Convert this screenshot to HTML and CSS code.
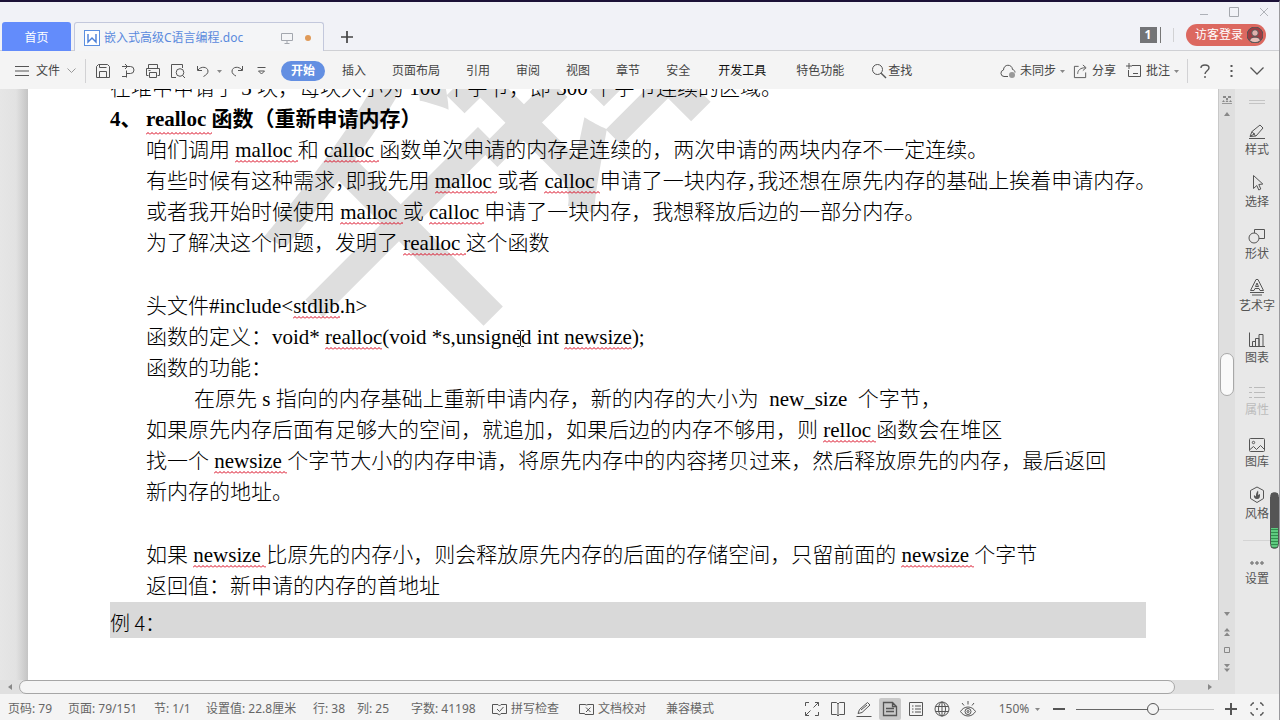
FILE: index.html
```html
<!DOCTYPE html>
<html lang="zh-CN">
<head>
<meta charset="utf-8">
<title>嵌入式高级C语言编程.doc</title>
<link rel="stylesheet" href="styles.css">
</head>
<body>
<div class="app">
  <header class="titlebar">
    <nav class="file-tabs">
      <button class="home-tab">首页</button>
      <div class="doc-tab">
        <svg class="icon" width="16" height="16" viewBox="0 0 16 16"><rect x=".5" y=".5" width="15" height="15" fill="#fff" stroke="#5b8fe0"/><path d="M4 4v8l4-4 4 4V4" stroke="#4a7fd8" stroke-width="1.4"/></svg>
        <span class="doc-name">嵌入式高级C语言编程.doc</span>
        <svg class="icon" width="12" height="12" viewBox="0 0 12 12"><path d="M.5 1.5h11v7H.5zM6 8.500v3M3.500 11.500h5" stroke="#a3a7ae"/></svg>
        <span class="dirty-dot"></span>
      </div>
      <button class="new-tab" aria-label="新建"><svg class="icon" width="12" height="12" viewBox="0 0 12 12"><path d="M6 0v12M0 6h12" stroke="#444" stroke-width="1.700"/></svg></button>
    </nav>
    <div class="title-right">
      <div class="window-buttons">
        <button aria-label="最小化"><svg class="icon" width="10" height="10" viewBox="0 0 10 10"><path d="M1 7.500h8" stroke="#aeb1b8"/></svg></button>
        <button aria-label="最大化"><svg class="icon" width="10" height="10" viewBox="0 0 10 10"><path d="M.5.5h9v9h-9z" stroke="#a5a8ae"/></svg></button>
        <button aria-label="关闭"><svg class="icon" width="10" height="10" viewBox="0 0 10 10"><path d="M1 1l8 8M9 1L1 9" stroke="#b0b3b9"/></svg></button>
      </div>
      <div class="account">
        <button class="window-count"><span>1</span></button>
        <i class="sep"></i>
        <button class="login">访客登录
          <svg class="icon" width="16" height="16" viewBox="0 0 16 16"><circle cx="8" cy="8" r="8" fill="#a03c42"/><circle cx="8" cy="6" r="3.300" fill="#e0b0ac"/><path d="M2.500 13.500c1-4.500 10-4.500 11 0A8 8 0 0 1 2.500 13.500z" fill="#e8beb8"/></svg>
        </button>
      </div>
    </div>
  </header>

  <div class="ribbon">
    <button class="file-menu">
      <svg class="icon" width="14" height="12" viewBox="0 0 14 12"><path d="M0 1.500h14M0 6h14M0 10.500h14" stroke="#555"/></svg>
      文件
      <svg class="icon" width="9" height="6" viewBox="0 0 9 6"><path d="M.5.5l4 4 4-4" stroke="#999"/></svg>
    </button>
    <i class="sep"></i>
    <div class="quick">
      <button aria-label="保存"><svg class="icon" width="16" height="16" viewBox="0 0 16 16"><path d="M1.500 14.500v-11l2-2h9l2 2v11zM4.500 14.500v-6h7v6M4.500 1.500v3h7"/></svg></button>
      <button aria-label="输出"><svg class="icon" width="16" height="16" viewBox="0 0 16 16"><path d="M2 3.500h8.500a3.500 3.500 0 0 1 0 7H6.500M5 1l2.500 2.500L5 6M6.500 14.500v-7M2 13.500h4.500"/></svg></button>
      <button aria-label="打印"><svg class="icon" width="16" height="16" viewBox="0 0 16 16"><path d="M3.500 5.500v-4h9v4M3.500 12.500h-2v-7h13v7h-2M4.500 9.500h7v5h-7zM3.500 7.500h2"/></svg></button>
      <button aria-label="打印预览"><svg class="icon" width="16" height="16" viewBox="0 0 16 16"><path d="M6 14.500H1.500v-13h11V5M12.500 12.500l2.500 2.500"/><circle cx="10" cy="9.500" r="3.800"/></svg></button>
      <button aria-label="撤销"><svg class="icon" width="16" height="16" viewBox="0 0 16 16"><path d="M2.500 3v4.500H7M3 7c3-4 9.500-3.500 10 1 .2 2.500-2 4-4.500 5.500"/></svg></button>
      <button class="drop" aria-label="撤销列表"><svg class="icon" width="5" height="3" viewBox="0 0 5 3"><path class="solid" d="M0 0h5L2.500 3z"/></svg></button>
      <button aria-label="恢复"><svg class="icon" width="16" height="16" viewBox="0 0 16 16"><path d="M13.500 3v4.500H9M13 7c-3-4-9.500-3.500-10 1-.2 2.500 2 4 4 5"/></svg></button>
      <button aria-label="更多"><svg class="icon" width="9" height="8" viewBox="0 0 9 8"><path d="M.5.5h8M1.500 4l3 3 3-3z"/></svg></button>
    </div>
    <nav class="menu">
      <button class="active">开始</button>
      <button>插入</button>
      <button>页面布局</button>
      <button>引用</button>
      <button>审阅</button>
      <button>视图</button>
      <button>章节</button>
      <button>安全</button>
      <button class="wide strong">开发工具</button>
      <button class="wide">特色功能</button>
      <button class="find"><svg class="icon" width="16" height="16" viewBox="0 0 16 16"><circle cx="6.500" cy="6.500" r="5"/><path d="M10.200 10.200l4.800 4.800" stroke-width="1.400"/></svg>查找</button>
    </nav>
    <div class="ribbon-right">
      <button class="sync"><svg class="icon" width="16" height="16" viewBox="0 0 16 16"><path d="M8 13.500H4a3.300 3.300 0 0 1-.5-6.500C3.500 1 12 .5 12.500 6.500c1.500.3 2.500 1.500 2.500 3"/><circle cx="12" cy="12" r="3" fill="#999" stroke="none"/></svg>未同步<svg class="icon" width="5" height="3" viewBox="0 0 5 3"><path class="solid" d="M0 0h5L2.500 3z"/></svg></button>
      <button class="share"><svg class="icon" width="15" height="15" viewBox="0 0 16 16"><path d="M6 2.500H1.500v12h12V9M5 10.500c0-4 3-6.500 8-6.500M10.500 1L14 4l-3.500 3"/></svg>分享</button>
      <button class="comment"><svg class="icon" width="16" height="16" viewBox="0 0 16 16"><path d="M6 2.500h8.500v11h-12V7M3 0v6M0 3h6M7 10.500h5"/></svg>批注<svg class="icon" width="5" height="3" viewBox="0 0 5 3"><path class="solid" d="M0 0h5L2.500 3z"/></svg></button>
      <i class="sep"></i>
      <button class="tool" aria-label="帮助"><svg class="icon" width="10" height="14" viewBox="0 0 10 14"><path d="M1 4c0-4 8-4 8 0 0 2.500-4 3-4 6M5 12v2" stroke-width="1.400"/></svg></button>
      <button class="tool" aria-label="更多选项"><svg class="icon" width="3" height="12" viewBox="0 0 3 12"><path d="M1.500 0v2M1.500 5v2M1.500 10v2" stroke-width="2"/></svg></button>
      <button class="tool" aria-label="收起功能区"><svg class="icon" width="14" height="8" viewBox="0 0 14 8"><path d="M.5.5L7 7 13.500.5" stroke-width="1.300"/></svg></button>
    </div>
  </div>

  <div class="workspace">
    <div class="viewer">
      <div class="canvas">
        <main class="page">
          <div class="watermark" aria-hidden="true">千<span>锋</span></div>
          <article class="text">
            <p class="out">在堆中申请了 3 块，每块大小为 100 个字节，即 300 个字节连续的区域。</p>
            <h1><span class="num">4、</span><u>realloc </u>函数（重新申请内存）</h1>
            <p>咱们调用 <u>malloc </u>和 <u>calloc </u>函数单次申请的内存是连续的，两次申请的两块内存不一定连续。</p>
            <p>有些时候有这种需求<span class="half">，</span>即我先用 <u>malloc </u>或者 <u>calloc </u>申请了一块内存<span class="half">，</span>我还想在原先内存的基础上挨着申请内存。</p>
            <p>或者我开始时候使用 <u>malloc </u>或 <u>calloc </u>申请了一块内存，我想释放后边的一部分内存。</p>
            <p>为了解决这个问题，发明了 <u>realloc </u>这个函数</p>
            <p class="blank"></p>
            <p>头文件#include&lt;<u>stdlib</u>.h&gt;</p>
            <p>函数的定义：void* <u>realloc</u>(void *s,unsign<span class="caret-host">e<svg class="ibeam" width="9" height="17" viewBox="0 0 9 17"><path d="M1 .5h2.500l1 1 1-1H8M4.500 1.500v14M1 16.500h2.500l1-1 1 1H8" fill="none" stroke="#222"/></svg></span>d int <u>newsize</u>);</p>
            <p>函数的功能：</p>
            <p class="indent">在原先 s 指向的内存基础上重新申请内存，新的内存的大小为  new_size  个字节，</p>
            <p>如果原先内存后面有足够大的空间，就追加，如果后边的内存不够用，则 <u>relloc </u>函数会在堆区</p>
            <p>找一个 <u>newsize </u>个字节大小的内存申请，将原先内存中的内容拷贝过来，然后释放原先的内存，最后返回</p>
            <p>新内存的地址。</p>
            <p class="blank"></p>
            <p>如果 <u>newsize </u>比原先的内存小，则会释放原先内存的后面的存储空间，只留前面的 <u>newsize </u>个字节</p>
            <p>返回值：新申请的内存的首地址</p>
            <p class="example">例 4：</p>
          </article>
        </main>
        <div class="vscroll">
          <svg class="icon" width="10" height="10" viewBox="0 0 10 10"><path class="solid" d="M1 1h3v2H1zM6 1h3v2H6zM4 3h2v2H4zM0 7l1.500-2L3 7zM3.500 7L5 5l1.500 2zM7 7l1.500-2L10 7z"/><path d="M0 8.500h10" stroke="#999"/></svg>
          <button class="arrow" aria-label="向上"><svg class="icon" width="6" height="4" viewBox="0 0 6 4"><path class="solid" d="M0 4h6L3 0z"/></svg></button>
          <div class="vtrack"><div class="vthumb"></div></div>
          <button class="arrow" aria-label="向下"><svg class="icon" width="6" height="4" viewBox="0 0 6 4"><path class="solid" d="M0 0h6L3 4z"/></svg></button>
          <button class="arrow" aria-label="上一页"><svg class="icon" width="6" height="8" viewBox="0 0 6 8"><path class="solid" d="M0 3.500h6L3 0zM0 8h6L3 4.500z"/></svg></button>
          <button class="arrow" aria-label="选择浏览对象"><svg class="icon" width="6" height="6" viewBox="0 0 6 6"><path d="M.5.5h5v5h-5z" stroke="#888"/></svg></button>
          <button class="arrow" aria-label="下一页"><svg class="icon" width="6" height="8" viewBox="0 0 6 8"><path class="solid" d="M0 0h6L3 3.500zM0 4.500h6L3 8z"/></svg></button>
        </div>
      </div>
      <div class="hscroll">
        <button aria-label="向左"><svg class="icon" width="4" height="6" viewBox="0 0 4 6"><path class="solid" d="M4 0v6L0 3z"/></svg></button>
        <div class="hthumb"></div>
        <button class="right" aria-label="向右"><svg class="icon" width="4" height="6" viewBox="0 0 4 6"><path class="solid" d="M0 0v6l4-3z"/></svg></button>
      </div>
    </div>
    <aside class="sidebar">
      <div class="grip"></div>
      <button><svg class="icon" width="18" height="16" viewBox="0 0 18 16"><path d="M1 14.500h16M2 12.500l2-5 8-6.500 3 3-7 8zM4 7.500l3.500 4.500M2 12.500l5-3"/></svg>样式</button>
      <button><svg class="icon" width="16" height="18" viewBox="0 0 16 18"><path d="M4.500 1.500v13l3.300-3 2 4.500 2-1-2-4.500 4-.5z"/></svg>选择</button>
      <button><svg class="icon" width="18" height="16" viewBox="0 0 18 16"><circle cx="6" cy="10" r="5"/><path d="M6.500 5V1.500h10v9H11"/></svg>形状</button>
      <button><svg class="icon" width="16" height="18" viewBox="0 0 16 18"><path d="M1.500 12.500L7 1.500h2l5.500 11H11l-1-2H6l-1 2zM8 5L6.500 8.500h3zM1 14.500h14M3 17h10"/></svg>艺术字</button>
      <button><svg class="icon" width="16" height="16" viewBox="0 0 16 16"><path d="M.5.5v14H16M3.500 14.500v-5h3v5M6.500 14.500V6.500h3.500v8M10 14.500V2.500h4v12"/></svg>图表</button>
      <button class="dim" disabled><svg class="icon" width="16" height="14" viewBox="0 0 16 14"><path d="M0 1.500h3M5 1.500h11M0 6.500h3M5 6.500h11M0 11.500h3M5 11.500h11"/></svg>属性</button>
      <button><svg class="icon" width="16" height="14" viewBox="0 0 16 14"><rect x=".5" y=".5" width="15" height="13" rx="1"/><circle cx="4.500" cy="4.500" r="1.200"/><path d="M1 11.500l3.500-3 3 3 4-4L15 11"/></svg>图库</button>
      <button><svg class="icon" width="16" height="18" viewBox="0 0 16 18"><path d="M8 1l6.500 3.500v8L8 16.500 1.500 12.500v-8z"/><path class="solid dark" d="M8 13c-2.500 0-3.500-2-3-4l2 1.500c-.2-2.500.5-4.500 2-6 .5 1.500.3 3-.2 4.500l2.200-1c.3 3-.5 5-3 5z"/></svg>风格</button>
      <hr>
      <button class="settings"><svg class="icon" width="14" height="4" viewBox="0 0 14 4"><circle cx="2" cy="2" r="1.200"/><circle cx="7" cy="2" r="1.200"/><circle cx="12" cy="2" r="1.200"/></svg>设置</button>
    </aside>
    <div class="meter"></div>
  </div>

  <footer class="status">
    <div class="facts">
      <span>页码: 79</span><span>页面: 79/151</span><span>节: 1/1</span><span>设置值: 22.8厘米</span><span>行: 38</span><span>列: 25</span><span>字数: 41198</span>
      <button><svg class="icon" width="15" height="13" viewBox="0 0 15 13"><path d="M6 11L5 10.500H.5v-9H6L7.500 3 9 1.500h5.500v9H9L7.500 12 6 11M5 6l2.500 2.500L11.500 4"/></svg>拼写检查</button>
      <button><svg class="icon" width="15" height="13" viewBox="0 0 15 13"><path d="M6 11L5 10.500H.5v-9H6L7.500 2 9 1.500h5.500v10H6M7 4.500l4.500 4.500M11.500 4.500L7 9"/></svg>文档校对</button>
      <span>兼容模式</span>
    </div>
    <div class="views">
      <button aria-label="全屏"><svg class="icon" width="16" height="16" viewBox="0 0 16 16"><path d="M1.500 5V1.500H5M11 1.500h3.500V5M14.500 11v3.500H11M5 14.500H1.500V11M9.500 6.500l5-5M6.500 9.500l-5 5"/></svg></button>
      <button aria-label="阅读版式"><svg class="icon" width="16" height="16" viewBox="0 0 16 16"><path d="M8 3L6.500 1.500h-5v12h5L8 15l1.500-1.500h5v-12h-5L8 3v12"/></svg></button>
      <button aria-label="写作模式"><svg class="icon" width="16" height="16" viewBox="0 0 16 16"><path d="M.5 15.500h15M2 12.500l1.500-4 8-7 2.500 2.500-8 7.500zM5 9l6-5"/></svg></button>
      <button class="active" aria-label="页面视图"><svg class="icon" width="16" height="16" viewBox="0 0 16 16"><path d="M1.500 1.500h9l4 4v9h-13zM10.500 1.500v4h4M4 7.500h8M4 10.500h8" stroke-width="1.300"/></svg></button>
      <button aria-label="大纲视图"><svg class="icon" width="16" height="16" viewBox="0 0 16 16"><path d="M1.500 1.500h13v13h-13zM4 5h1.500M7 5h6M4 8h1.500M7 8h6M4 11h1.500M7 11h6"/></svg></button>
      <button aria-label="Web 版式"><svg class="icon" width="16" height="16" viewBox="0 0 16 16"><circle cx="8" cy="8" r="7"/><ellipse cx="8" cy="8" rx="3.500" ry="7"/><path d="M1.500 5.500h13M1.500 10.500h13M8 1v14"/></svg></button>
      <button aria-label="护眼模式"><svg class="icon" width="16" height="16" viewBox="0 0 16 16"><path d="M.5 10.500c3.500-6 11.500-6 15 0-3.500 6-11.500 6-15 0zM8 0v3.500M2 2l2 2.500M14 2l-2 2.500"/><circle cx="8" cy="10.500" r="3"/><circle cx="8" cy="10.500" r="1"/></svg></button>
      <button class="zoom">150%<svg class="icon" width="5" height="3" viewBox="0 0 5 3"><path class="solid" d="M0 0h5L2.500 3z"/></svg></button>
      <button aria-label="缩小"><svg class="icon" width="12" height="12" viewBox="0 0 12 12"><path d="M0 6h12" stroke-width="2"/></svg></button>
      <input class="slider" type="range" min="0" max="100" value="56" aria-label="显示比例">
      <button aria-label="放大"><svg class="icon" width="12" height="12" viewBox="0 0 12 12"><path d="M0 6h12M6 0v12" stroke-width="2"/></svg></button>
      <button aria-label="最佳显示比例"><svg class="icon" width="14" height="14" viewBox="0 0 14 14"><path d="M1 4V3l2-2h1M10 1h1l2 2v1M13 10v1l-2 2h-1M4 13H3l-2-2v-1M6 7h2" stroke-width="1.300"/></svg></button>
    </div>
  </footer>
</div>
</body>
</html>
```

FILE: styles.css
```css
* { box-sizing: border-box; }

body {
  margin: 0;
  font: 12px/16px "Noto Sans", "Noto Sans CJK SC", sans-serif;
  color: #444;
}

button {
  display: flex;
  align-items: center;
  justify-content: center;
  margin: 0;
  padding: 0;
  border: 0;
  background: none;
  color: inherit;
  font: inherit;
  white-space: nowrap;
}

.icon {
  display: block;
  flex: none;
  fill: none;
  stroke: #555;
}
.icon .solid { fill: #888; stroke: none; }
.icon .dark { fill: #555; }

.sep {
  width: 1px;
  height: 24px;
  background: #d2d2d4;
}

.app {
  display: flex;
  flex-direction: column;
  height: 100vh;
  border-top: 2px solid #1c1238;
  border-right: 1px solid #9a9a9e;
  background: #f4f4f4;
  overflow: hidden;
}

/* Title bar */
.titlebar {
  display: flex;
  justify-content: space-between;
  height: 49px;
  background: #f1f2f7;
  border-bottom: 1px solid #cfd0d4;
}
.file-tabs {
  display: flex;
  align-items: flex-end;
  padding-left: 2px;
  margin-bottom: -1px;
}
.home-tab {
  width: 69px;
  height: 29px;
  padding-top: 2px;
  margin-right: 3px;
  border-radius: 3px 3px 0 0;
  background: #638cfb;
  color: #fff;
}
.doc-tab {
  display: flex;
  align-items: center;
  width: 250px;
  height: 29px;
  padding: 2px 12px 0 9px;
  border: 1px solid #c3c8dc;
  border-bottom: 0;
  border-radius: 3px 3px 0 0;
  background: #f4f5f7;
  color: #5a8add;
}
.doc-name { flex: 1; padding-left: 4px; }
.dirty-dot {
  width: 6px;
  height: 6px;
  margin-left: 12px;
  border-radius: 50%;
  background: #e09a58;
}
.new-tab { width: 46px; height: 29px; }

.title-right { padding-right: 8px; }
.window-buttons {
  display: flex;
  justify-content: flex-end;
  gap: 20px;
  height: 20px;
  padding-right: 2px;
}
.account {
  display: flex;
  align-items: center;
  justify-content: flex-end;
  height: 24px;
  padding: 2px 5px 0 0;
}
.window-count {
  height: 16px;
  padding-right: 2px;
  border-right: 1px solid #777;
  color: #fff;
  font-weight: 700;
}
.window-count span {
  width: 18px;
  padding-right: 1px;
  border-right: 1px solid #f1f2f7;
  background: #737477;
}
.account .sep { height: 14px; margin: 0 12px; }
.login {
  gap: 4px;
  height: 22px;
  padding: 0 3px 0 9px;
  border-radius: 11px;
  background: #dc6860;
  color: #fff;
}

/* Ribbon */
.ribbon {
  display: flex;
  align-items: center;
  height: 38px;
  flex: none;
  padding-top: 2px;
  background: #f4f4f4;
}
.file-menu { gap: 7px; padding: 0 9px 0 15px; }
.quick { display: flex; padding: 0 7px 0 4px; }
.quick button { width: 25px; height: 24px; }
.quick .drop { width: 9px; }
.menu { display: flex; flex: 1; }
.menu button { height: 20px; padding: 0 13px; }
.menu .active {
  padding: 0 10px;
  margin-right: 4px;
  border-radius: 10px;
  background: #638fe2;
  color: #fff;
  font-weight: 700;
}
.menu .wide { padding: 0 15px; }
.menu .strong { color: #111; }
.menu .find { padding: 0 12px; gap: 1px; }
.ribbon-right { display: flex; align-items: center; padding-right: 9px; }
.ribbon-right button { gap: 4px; }
.ribbon-right .sync { margin-right: 8px; }
.ribbon-right .share { margin-right: 10px; }
.ribbon-right .comment { margin-right: 8px; }
.ribbon-right .tool { width: 26px; height: 24px; }
.ribbon-right .sep { margin-right: 4px; }

/* Document area */
.workspace {
  position: relative;
  display: flex;
  flex: 1;
  min-height: 0;
}
.viewer {
  display: flex;
  flex: 1;
  flex-direction: column;
  min-width: 0;
}
.canvas {
  display: flex;
  flex: 1;
  min-height: 0;
  padding-left: 28px;
  background: linear-gradient(90deg, #e6e6e6 0, #e2e2e2 16px, #c4c4c4 28px);
}
.page {
  position: relative;
  flex: 1;
  min-width: 0;
  overflow: hidden;
  background: #fff;
}
.watermark {
  position: absolute;
  left: 222px;
  top: -14px;
  color: #dedede;
  font: 500 270px/264px "Noto Sans CJK SC", sans-serif;
  white-space: nowrap;
  transform: rotate(-45deg);
  transform-origin: 135px 132px;
}
.watermark span {
  margin-left: -44px;
  font-size: 300px;
}
.text {
  position: relative;
  margin-top: -16px;
  padding: 0 72px 0 82px;
  color: #000;
  font: 300 21px/31px "Liberation Serif", "Noto Sans CJK SC", serif;
}
.text p {
  margin: 0;
  height: 31px;
  padding-left: 36px;
  white-space: pre;
}
.text .out { padding-left: 0; }
.text .indent { padding-left: 84px; }
.text .blank { height: 32px; }
.text h1 {
  display: flex;
  margin: 0;
  height: 31px;
  font: inherit;
  font-weight: 700;
  white-space: pre;
}
.text .num { width: 36px; }
.text .half { font-feature-settings: "halt"; }
.text u {
  padding-bottom: 1px;
  text-decoration: none;
  background: url("data:image/svg+xml,%3Csvg xmlns='http://www.w3.org/2000/svg' width='4' height='3'%3E%3Cpath d='M0 2.500L2 .5l2 2' fill='none' stroke='%23d80018'/%3E%3C/svg%3E") 0 100% repeat-x;
}
.text .example {
  height: 36px;
  padding: 0;
  background: #d9d9d9;
  font-family: "Noto Sans CJK SC", sans-serif;
  font-size: 20px;
  line-height: 42px;
}
.caret-host { position: relative; }
.ibeam { position: absolute; left: 4px; top: 5px; }

/* Scroll bars */
.vscroll {
  display: flex;
  flex-direction: column;
  align-items: center;
  width: 17px;
  padding: 6px 0 3px;
  border-left: 1px solid #c8c8c8;
  background: #dfdfdf;
}
.arrow { width: 16px; height: 18px; flex: none; }
.vtrack {
  flex: 1;
  width: 14px;
  padding-top: 230px;
}
.vthumb {
  height: 43px;
  border: 1px solid #a8a8a8;
  border-radius: 7px;
  background: #fafafa;
}
.hscroll {
  display: flex;
  height: 14px;
  background: #e0e0e0;
}
.hscroll button { width: 19px; }
.hscroll .right { width: 50px; }
.hthumb {
  flex: 1;
  margin-right: 10px;
  border: 1px solid #a6a6a6;
  border-radius: 7px;
  background: #f5f5f5;
}

/* Side bar */
.sidebar {
  display: flex;
  flex-direction: column;
  width: 44px;
  background: #e8e8e8;
  color: #555;
}
.grip {
  height: 4px;
  margin: 11px 14px;
  border: 1px solid #c4c4c4;
  border-width: 1px 0;
}
.sidebar button {
  flex-direction: column;
  justify-content: flex-end;
  gap: 2px;
  height: 52px;
  padding-bottom: 9px;
}
.sidebar .dim { opacity: .3; }
.sidebar hr {
  width: 28px;
  margin: 9px auto 0;
  border: 0;
  border-top: 1px solid #d4d4d4;
}
.sidebar .settings { height: 55px; gap: 6px; }
.meter {
  position: absolute;
  right: 0;
  top: 403px;
  width: 9px;
  height: 57px;
  border-radius: 5px;
  border: 1px solid #555;
  background: linear-gradient(#555 35px, transparent 35px), repeating-linear-gradient(#2f8f4c 0 1px, #5fca80 1px 3px);
}

/* Status bar */
.status {
  display: flex;
  align-items: center;
  justify-content: space-between;
  flex: none;
  height: 26px;
  padding-top: 4px;
  color: #666;
}
.facts {
  display: grid;
  grid-template-columns: 60px 86px 52px 107px 44px 54px 81px 87px 87px auto;
  align-items: center;
  padding-left: 8px;
  white-space: nowrap;
}
.facts button { justify-content: flex-start; gap: 4px; }
.views { display: flex; align-items: center; padding-right: 9px; }
.views button { width: 26px; height: 22px; }
.views .active { width: 22px; margin: 0 2px; background: #c9c9c9; border-radius: 2px; }
.views .zoom { width: 65px; gap: 6px; padding-left: 12px; }
.slider {
  appearance: none;
  width: 138px;
  height: 14px;
  margin: 0 4px;
  background: linear-gradient(90deg, #666 54%, #c4c4c4 54%) 0 50% / 100% 1px no-repeat;
}
.slider::-webkit-slider-thumb {
  appearance: none;
  width: 12px;
  height: 12px;
  border: 1px solid #555;
  border-radius: 50%;
  background: #f4f4f4;
}
```
